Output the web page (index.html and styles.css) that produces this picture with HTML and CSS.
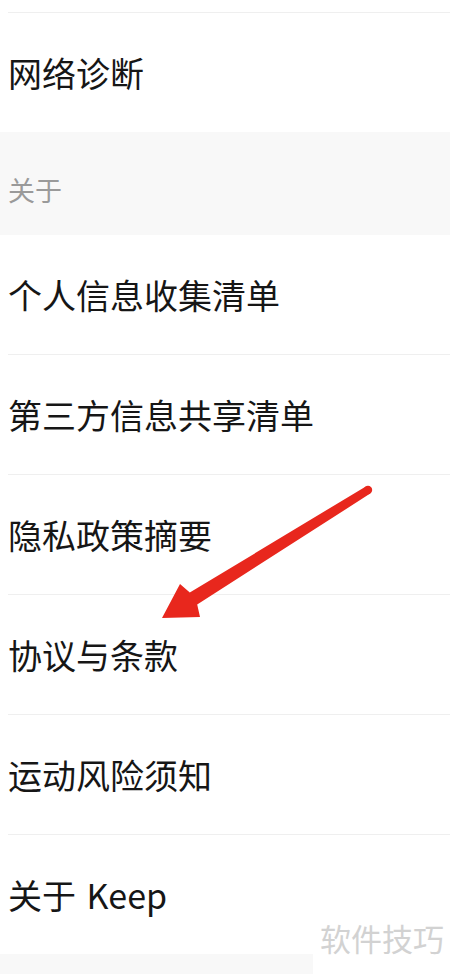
FILE: index.html
```html
<!DOCTYPE html>
<html lang="zh-CN">
<head>
    <meta charset="UTF-8">
    <meta name="viewport" content="width=device-width, initial-scale=1.0">
    <title>设置 - 关于</title>
    <link rel="stylesheet" href="styles.css">
</head>
<body>
    <div class="page">
        <div class="list">
            <div class="row stub"></div>
            <div class="row last"><span class="label">网络诊断</span></div>
        </div>

        <div class="section-title">关于</div>

        <div class="list">
            <div class="row"><span class="label">个人信息收集清单</span></div>
            <div class="row"><span class="label">第三方信息共享清单</span></div>
            <div class="row"><span class="label">隐私政策摘要</span></div>
            <div class="row"><span class="label">协议与条款</span></div>
            <div class="row"><span class="label">运动风险须知</span></div>
            <div class="row last"><span class="label">关于&nbsp;Keep</span></div>
        </div>

        <div class="section-gap"></div>

        <!-- red pointer drawn over the list -->
        <svg class="arrow" width="450" height="974" viewBox="0 0 450 974">
            <circle cx="368" cy="490" r="4.2" fill="#e8271d"/>
            <polygon fill="#e8271d" points="365.8,486.4 189.8,592.6 180,584 162,618 200,617 197.2,604.4 370.2,493.6"/>
        </svg>

        <div class="watermark">软件技巧</div>
    </div>
</body>
</html>
```

FILE: styles.css
```css
* {
    margin: 0;
    padding: 0;
    box-sizing: border-box;
}

body {
    font-family: "Noto Sans CJK SC", "Noto Sans", sans-serif;
    background: #fff;
    color: #161616;
}

.page {
    position: relative;
    width: 450px;
    height: 974px;
    overflow: hidden;
}

.list {
    padding-left: 8px;
    background: #fff;
}

.row {
    height: 120px;
    display: flex;
    align-items: center;
    border-bottom: 1px solid #efefef;
}

.row.stub {
    height: 13px;
}

.row.last {
    height: 119px;
    border-bottom: none;
}

.label {
    font-size: 34px;
    line-height: 34px;
    word-spacing: 3px;
}

.section-title {
    height: 103px;
    background: #f8f8f8;
    color: #9a9a9a;
    font-size: 27px;
    line-height: 27px;
    padding: 44px 0 0 8px;
}

.section-gap {
    height: 40px;
    background: #f8f8f8;
}

.arrow {
    position: absolute;
    left: 0;
    top: 0;
}

.watermark {
    position: absolute;
    right: 0;
    bottom: 0;
    width: 137px;
    height: 58px;
    background: #fff;
    color: #d2d2d2;
    font-size: 31px;
    line-height: 31px;
    padding: 6px 0 0 7px;
    white-space: nowrap;
}
```
